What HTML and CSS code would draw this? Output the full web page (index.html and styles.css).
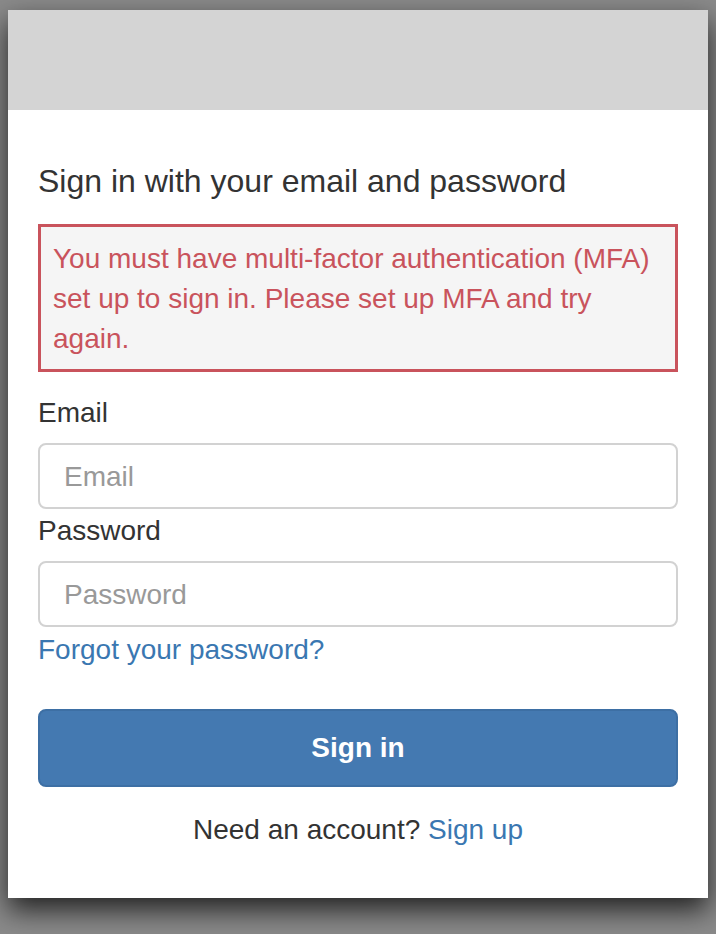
FILE: index.html
```html
<!DOCTYPE html>
<html lang="en">
<head>
<meta charset="utf-8">
<title>Sign in</title>
<link rel="stylesheet" href="styles.css">
</head>
<body>
<div class="card">
  <div class="banner"></div>
  <div class="content">
    <h1 class="title">Sign in with your email and password</h1>
    <div class="error">You must have multi-factor authentication (MFA) set up to sign in. Please set up MFA and try again.</div>
    <form class="form">
      <label class="label label-email" for="email">Email</label>
      <input class="input" id="email" type="text" placeholder="Email">
      <label class="label label-password" for="password">Password</label>
      <input class="input" id="password" type="password" placeholder="Password">
      <a class="link forgot" href="#">Forgot your password?</a>
      <button class="submit" type="button">Sign in</button>
      <p class="signup">Need an account? <a class="link" href="#">Sign up</a></p>
    </form>
  </div>
</div>
</body>
</html>
```
FILE: styles.css
```css
html, body {
  margin: 0;
  padding: 0;
}
html {
  background: #8a8a8a;
}
body {
  min-height: 934px;
  box-sizing: border-box;
  padding: 10px 8px 0;
  font-family: "Liberation Sans", Arial, Helvetica, sans-serif;
  color: #333333;
}
.card {
  width: 700px;
  height: 888px;
  background: #ffffff;
  box-shadow: 0 12px 26px rgba(0, 0, 0, 0.75);
  display: flex;
  flex-direction: column;
}
.banner {
  height: 100px;
  background: #d4d4d4;
}
.content {
  padding: 51px 30px 48px;
  display: flex;
  flex-direction: column;
}
.title {
  margin: 0;
  font-size: 32px;
  line-height: 40px;
  font-weight: normal;
  color: #333333;
}
.error {
  margin-top: 23px;
  border: 3px solid #c9535c;
  background: #f5f5f5;
  color: #c9535c;
  font-size: 28px;
  line-height: 40px;
  padding: 12px 12px 10px;
}
.form {
  display: flex;
  flex-direction: column;
}
.label {
  display: block;
  font-size: 28px;
  line-height: 40px;
  color: #333333;
}
.label-email {
  margin-top: 21px;
}
.label-password {
  margin-top: 2px;
}
.input {
  margin: 10px 0 0;
  box-sizing: border-box;
  height: 66px;
  width: 100%;
  border: 2px solid #d2d2d2;
  border-radius: 8px;
  padding: 2px 24px 0;
  font-family: inherit;
  font-size: 28px;
  color: #555555;
  background: #ffffff;
  outline: none;
}
.input::placeholder {
  color: #999999;
}
.link {
  color: #3a77b1;
  text-decoration: none;
}
.forgot {
  margin-top: 3px;
  font-size: 28px;
  line-height: 40px;
  align-self: flex-start;
}
.submit {
  margin-top: 39px;
  height: 78px;
  box-sizing: border-box;
  border: 2px solid #3d6fa4;
  border-radius: 8px;
  background: #4479b1;
  color: #ffffff;
  font-family: inherit;
  font-size: 28px;
  font-weight: bold;
  cursor: pointer;
}
.signup {
  margin: 23px 0 0;
  text-align: center;
  font-size: 28px;
  line-height: 40px;
  color: #333333;
}
```
